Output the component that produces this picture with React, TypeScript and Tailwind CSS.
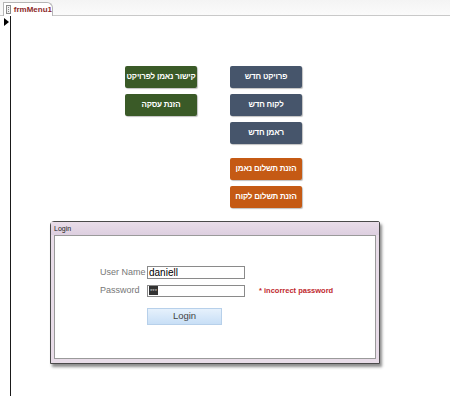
import type { ReactNode } from "react";

function MenuButton({ color, children }: { color: string; children: ReactNode }) {
    return (
        <div
            dir="rtl"
            className={`w-[72px] h-[22px] rounded-[2px] flex items-center justify-center whitespace-nowrap text-white text-[8px] font-bold tracking-[-0.2px] shadow-[1px_1px_1px_rgba(0,0,0,0.25)] ${color}`}
        >
            {children}
        </div>
    );
}

export default function App() {
    return (
        <div className="w-[450px] h-[396px] bg-white overflow-hidden flex flex-col font-['Liberation_Sans',Arial,sans-serif]">
            {/* TAB STRIP */}
            <div className="h-[16px] flex items-end bg-gradient-to-b from-[#f4f4f4] to-[#fbfbfb] border-b border-[#c9c9c9]">
                <div className="ml-[3px] h-[14px] w-[50px] flex items-center gap-[3px] pl-[2px] bg-white border border-b-0 border-[#b5b5b5] rounded-tr-[6px] -mb-px">
                    <div className="w-[8px] h-[9px] border border-[#8a8a8a] bg-[#f0f0f0] flex flex-col gap-px pt-px px-px">
                        <div className="h-px bg-[#8a8a8a]" />
                        <div className="h-px bg-[#8a8a8a]" />
                        <div className="h-px bg-[#8a8a8a]" />
                    </div>
                    <span className="text-[8px] font-bold text-[#8e2b2b] leading-none">frmMenu1</span>
                </div>
            </div>

            {/* BODY */}
            <div className="flex-1 flex">
                <div className="w-[11px] border-r border-[#1a1a1a] pt-[2px] pl-[4px]">
                    <div className="w-0 h-0 border-y-[4px] border-y-transparent border-l-[5px] border-l-black" />
                </div>

                <div className="flex-1 flex flex-col">
                    <div className="flex gap-[33px] ml-[114px] mt-[50px]">
                        <div className="flex flex-col gap-[6px]">
                            <MenuButton color="bg-[#3a5a27]">קישור נאמן לפרויקט</MenuButton>
                            <MenuButton color="bg-[#3a5a27]">הזנת עסקה</MenuButton>
                        </div>
                        <div className="flex flex-col gap-[6px]">
                            <MenuButton color="bg-[#46556b]">פרויקט חדש</MenuButton>
                            <MenuButton color="bg-[#46556b]">לקוח חדש</MenuButton>
                            <MenuButton color="bg-[#46556b]">ראמן חדש</MenuButton>
                            <div className="h-[2px]" />
                            <MenuButton color="bg-[#c55a14]">הזנת תשלום נאמן</MenuButton>
                            <MenuButton color="bg-[#c55a14]">הזנת תשלום לקוח</MenuButton>
                        </div>
                    </div>

                    {/* LOGIN DIALOG */}
                    <div className="ml-[39px] mt-[13px] w-[330px] h-[143px] flex flex-col bg-[#e8dce8] border border-[#4a4a4a] rounded-tl-[4px] rounded-tr-[2px] shadow-[2px_3px_3px_rgba(0,0,0,0.45)]">
                        <div className="h-[13px] flex items-center pl-[3px] bg-gradient-to-b from-[#e9dde9] to-[#ddcfe0]">
                            <span className="text-[7px] text-[#222] leading-none">Login</span>
                        </div>
                        <div className="flex-1 mx-[3px] mb-[4px] bg-white border border-[#9a9a9a] flex flex-col pt-[30px] pl-[45px]">
                            <div className="flex items-center h-[13px]">
                                <span className="w-[47px] whitespace-nowrap text-[9px] text-[#777]">User Name</span>
                                <div className="w-[98px] h-[13px] border border-[#8a8a8a] flex items-center pl-[1px] text-[10px] text-black leading-none">
                                    daniell
                                </div>
                            </div>
                            <div className="flex items-center h-[13px] mt-[5px]">
                                <span className="w-[47px] whitespace-nowrap text-[9px] text-[#777]">Password</span>
                                <div className="w-[98px] h-[12px] border border-[#8a8a8a] flex items-center pl-[1px]">
                                    <span className="bg-[#333] text-[#ccc] text-[6px] leading-none px-[1px] h-[9px] flex items-center">***</span>
                                </div>
                                <span className="ml-[14px] whitespace-nowrap text-[7.5px] font-bold text-[#c0272d]">* incorrect password</span>
                            </div>
                            <div className="ml-[47px] mt-[11px] w-[75px] h-[17px] flex items-center justify-center bg-gradient-to-b from-[#e6f1fc] to-[#c8dff6] border border-[#b7d0ea] text-[9.5px] text-[#444]">
                                Login
                            </div>
                        </div>
                    </div>
                </div>
            </div>
        </div>
    );
}
